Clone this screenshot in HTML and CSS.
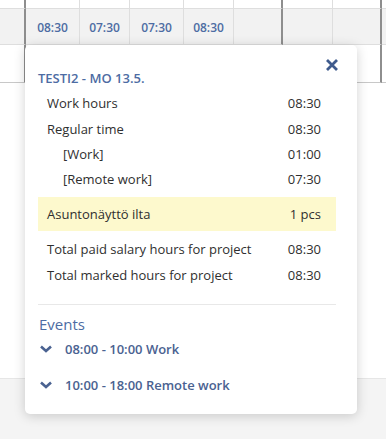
FILE: index.html
```html
<!DOCTYPE html>
<html lang="en">
<head>
    <meta charset="UTF-8">
    <meta name="viewport" content="width=device-width, initial-scale=1.0">
    <title>Day details</title>
    <link rel="stylesheet" href="styles.css">
</head>
<body>
    <div class="grid">
        <div class="cell thick"></div><div class="cell"></div><div class="cell"></div><div class="cell"></div><div class="cell"></div><div class="cell thick"></div><div class="cell"></div><div class="cell thick"></div><div class="cell end"></div>

        <div class="cell thick sum"></div>
        <div class="cell sum">08:30</div>
        <div class="cell sum">07:30</div>
        <div class="cell sum">07:30</div>
        <div class="cell sum">08:30</div>
        <div class="cell thick sum"></div>
        <div class="cell sum"></div>
        <div class="cell thick sum"></div>
        <div class="cell end sum"></div>

        <div class="cell thick"></div><div class="cell"></div><div class="cell"></div><div class="cell"></div><div class="cell"></div><div class="cell thick"></div><div class="cell"></div><div class="cell thick"></div><div class="cell end"></div>
    </div>
    <div class="blank"></div>
    <div class="footer"></div>

    <div class="popup">
        <button class="close" aria-label="Close">
            <svg width="14" height="14" viewBox="0 0 14 14"><path d="M2 2 L12 12 M12 2 L2 12" stroke="#3f5b8d" stroke-width="2.8" stroke-linecap="butt"/></svg>
        </button>
        <h3 class="title">TESTI2 - MO 13.5.</h3>

        <div class="row"><span>Work hours</span><span>08:30</span></div>
        <div class="row"><span>Regular time</span><span>08:30</span></div>
        <div class="row sub"><span>[Work]</span><span>01:00</span></div>
        <div class="row sub"><span>[Remote work]</span><span>07:30</span></div>

        <div class="row extra"><span>Asuntonäyttö ilta</span><span>1 pcs</span></div>

        <div class="row"><span>Total paid salary hours for project</span><span>08:30</span></div>
        <div class="row"><span>Total marked hours for project</span><span>08:30</span></div>

        <hr class="divider">

        <h4 class="events-title">Events</h4>
        <div class="event">
            <svg width="12" height="8" viewBox="0 0 12 8"><path d="M1 1.5 L6 6 L11 1.5" fill="none" stroke="#4a6291" stroke-width="2.6"/></svg>
            <span>08:00 - 10:00 Work</span>
        </div>
        <div class="event">
            <svg width="12" height="8" viewBox="0 0 12 8"><path d="M1 1.5 L6 6 L11 1.5" fill="none" stroke="#4a6291" stroke-width="2.6"/></svg>
            <span>10:00 - 18:00 Remote work</span>
        </div>
    </div>
</body>
</html>
```

FILE: styles.css
```css
* {
    box-sizing: border-box;
}
body {
    margin: 0;
    font-family: "Open Sans", Arial, sans-serif;
    color: #2f2f2f;
    background-color: #fff;
    position: relative;
    height: 439px;
    overflow: hidden;
}
.grid {
    display: grid;
    grid-template-columns: 26px 54px 50px 54px 50px 49px 50px 49px 4px;
    grid-template-rows: 9px 36px 38px;
}
.cell {
    border-right: 1px solid #dedede;
    border-bottom: 1px solid #dedede;
    display: flex;
    align-items: center;
    justify-content: center;
    font-size: 12px;
    font-weight: 600;
    color: #4d6ca3;
}
.cell.thick {
    border-right: 2px solid #8e8e8e;
}
.cell.end {
    border-right: none;
}
.cell.sum {
    background-color: #f2f2f2;
    padding-top: 1px;
}
.grid .cell:nth-last-child(-n+9) {
    border-bottom-color: #c8c8c8;
}
.blank {
    height: 295px;
}
.footer {
    height: 61px;
    background-color: #f4f4f4;
    border-top: 1px solid #e6e6e6;
}

.popup {
    position: absolute;
    left: 25px;
    top: 45px;
    width: 332px;
    padding: 24px 21px 19px 13px;
    background-color: #fff;
    border-radius: 5px;
    box-shadow: 0 2px 12px rgba(0, 0, 0, 0.18);
}
.close {
    position: absolute;
    top: 13px;
    right: 18px;
    width: 14px;
    height: 14px;
    padding: 0;
    border: none;
    background: none;
    display: flex;
}
.title {
    margin: 0 0 3px 0;
    font-size: 13px;
    line-height: 18px;
    font-weight: 600;
    color: #4d6ca3;
}
.row {
    display: flex;
    justify-content: space-between;
    padding: 4px 15px 4px 9px;
    font-size: 13px;
    line-height: 18px;
}
.row.sub {
    padding-left: 25px;
    padding-top: 3px;
    padding-bottom: 4px;
}
.row.extra {
    background-color: #fdf9cd;
    margin: 5px 0;
    padding-top: 8px;
    padding-bottom: 8px;
}
.divider {
    border: none;
    border-top: 1px solid #e8e8e8;
    margin: 16px 0 9px 0;
}
.events-title {
    margin: 0 0 5px 1px;
    font-size: 15px;
    line-height: 20px;
    font-weight: 500;
    color: #4d6ca3;
}
.event {
    display: flex;
    align-items: center;
    gap: 13px;
    padding-left: 2px;
    height: 20px;
    margin-bottom: 16px;
    font-size: 13px;
    font-weight: 600;
    color: #4a6291;
}
.event:last-child {
    margin-bottom: 0;
}
```
